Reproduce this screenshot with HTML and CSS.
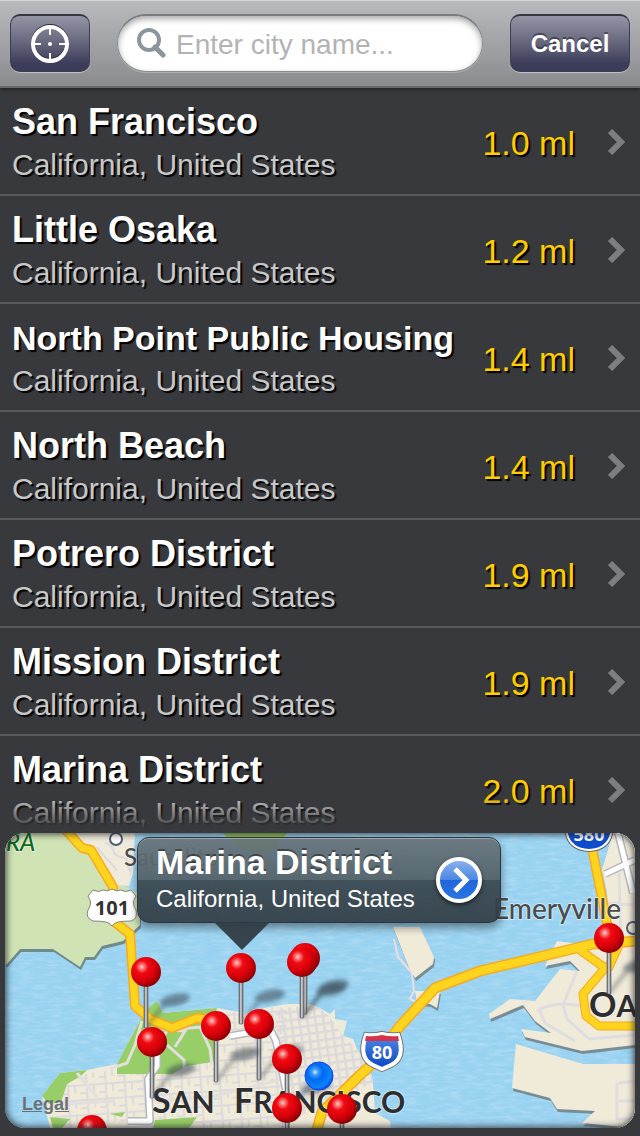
FILE: index.html
```html
<!DOCTYPE html>
<html lang="en">
<head>
  <meta charset="UTF-8">
  <meta name="viewport" content="width=device-width, initial-scale=1.0">
  <title>Choose City</title>
  <link rel="stylesheet" href="styles.css">
</head>
<body>
  <!-- Search bar -->
  <header class="toolbar">
    <button type="button" class="btn btn-locate" aria-label="Locate me">
      <svg width="40" height="40" viewBox="0 0 40 40" fill="none" stroke="#fff">
        <circle cx="20" cy="19" r="17" stroke="#2b2c40" stroke-width="4"/>
        <circle cx="20" cy="20" r="17" stroke-width="4"/>
        <path d="M20 4v7M20 29v7M4 20h7M29 20h7" stroke-width="2"/>
        <circle cx="20" cy="20" r="2" fill="#fff" stroke="none"/>
      </svg>
    </button>
    <form class="search">
      <label for="city">
        <svg width="30" height="32" viewBox="0 0 30 32" fill="none" stroke="#8b959c">
          <circle cx="13" cy="12" r="10" stroke-width="4"/>
          <path d="M19 19l8 8" stroke-width="5" stroke-linecap="round"/>
        </svg>
      </label>
      <input type="text" id="city" name="city" placeholder="Enter city name..." aria-label="City name">
    </form>
    <button type="button" class="btn btn-cancel">Cancel</button>
  </header>

  <!-- Nearby places -->
  <main class="places">
    <a class="place" href="#san-francisco">
      <span class="place-text"><b>San Francisco</b><small>California, United States</small></span>
      <span class="distance">1.0 ml</span>
      <svg class="chevron" viewBox="0 0 18 26"><path d="M2 2l11 11L2 24"/></svg>
    </a>
    <a class="place" href="#little-osaka">
      <span class="place-text"><b>Little Osaka</b><small>California, United States</small></span>
      <span class="distance">1.2 ml</span>
      <svg class="chevron" viewBox="0 0 18 26"><path d="M2 2l11 11L2 24"/></svg>
    </a>
    <a class="place" href="#north-point">
      <span class="place-text"><b class="long">North Point Public Housing</b><small>California, United States</small></span>
      <span class="distance">1.4 ml</span>
      <svg class="chevron" viewBox="0 0 18 26"><path d="M2 2l11 11L2 24"/></svg>
    </a>
    <a class="place" href="#north-beach">
      <span class="place-text"><b>North Beach</b><small>California, United States</small></span>
      <span class="distance">1.4 ml</span>
      <svg class="chevron" viewBox="0 0 18 26"><path d="M2 2l11 11L2 24"/></svg>
    </a>
    <a class="place" href="#potrero">
      <span class="place-text"><b>Potrero District</b><small>California, United States</small></span>
      <span class="distance">1.9 ml</span>
      <svg class="chevron" viewBox="0 0 18 26"><path d="M2 2l11 11L2 24"/></svg>
    </a>
    <a class="place" href="#mission">
      <span class="place-text"><b>Mission District</b><small>California, United States</small></span>
      <span class="distance">1.9 ml</span>
      <svg class="chevron" viewBox="0 0 18 26"><path d="M2 2l11 11L2 24"/></svg>
    </a>
    <a class="place" href="#marina">
      <span class="place-text"><b>Marina District</b><small>California, United States</small></span>
      <span class="distance">2.0 ml</span>
      <svg class="chevron" viewBox="0 0 18 26"><path d="M2 2l11 11L2 24"/></svg>
    </a>
  </main>

  <section class="map" aria-label="Map">
    <svg class="map-canvas" viewBox="0 0 630 295" preserveAspectRatio="xMinYMin slice">
      <defs>
        <radialGradient id="red" cx=".36" cy=".33" r=".7">
          <stop offset="0" stop-color="#ffd0d0"/>
          <stop offset=".14" stop-color="#fb6a6a"/>
          <stop offset=".3" stop-color="#f00a12"/>
          <stop offset=".65" stop-color="#d8000a"/>
          <stop offset="1" stop-color="#8a0004"/>
        </radialGradient>
        <radialGradient id="blue" cx=".36" cy=".36" r=".7">
          <stop offset="0" stop-color="#d0f4ff"/>
          <stop offset=".16" stop-color="#3a9cff"/>
          <stop offset=".4" stop-color="#0068f4"/>
          <stop offset=".8" stop-color="#0a84f8"/>
          <stop offset="1" stop-color="#0048e0"/>
        </radialGradient>
        <linearGradient id="stem">
          <stop offset="0" stop-color="#55585c"/>
          <stop offset=".45" stop-color="#d8dadd"/>
          <stop offset="1" stop-color="#5c5f63"/>
        </linearGradient>
        <linearGradient id="shield" x2="0" y2="1">
          <stop offset="0" stop-color="#4f8be6"/>
          <stop offset="1" stop-color="#0b45c4"/>
        </linearGradient>
        <filter id="soft" x="-50%" y="-50%" width="200%" height="200%"><feGaussianBlur stdDeviation="2"/></filter>
        <filter id="waves" x="0" y="0" width="100%" height="100%">
          <feTurbulence type="fractalNoise" baseFrequency=".07 .3" numOctaves="3" seed="4"/>
          <feColorMatrix values="0 0 0 0 1  0 0 0 0 1  0 0 0 0 1  1.6 0 0 0 -.62"/>
        </filter>
        <pattern id="streets" width="19" height="15" patternUnits="userSpaceOnUse" patternTransform="rotate(-4)">
          <path d="M0 2h19M7 0v15M0 10h7M14 2v8" stroke="#dddadd" stroke-width="2" fill="none"/>
        </pattern>
        <pattern id="downtown" width="8" height="8" patternUnits="userSpaceOnUse" patternTransform="rotate(-8)">
          <path d="M0 1h8M1 0v8" stroke="#dcd9dc" stroke-width="3" fill="none"/>
        </pattern>
        <g id="pin">
          <path d="M0 55L18 33" stroke="#39454d" stroke-opacity=".4" stroke-width="4" filter="url(#soft)"/>
          <ellipse cx="29" cy="28" rx="15" ry="6" transform="rotate(-12 29 28)" fill="#33424e" fill-opacity=".55" filter="url(#soft)"/>
          <rect x="-2" y="12" width="4" height="44" rx="1" fill="url(#stem)" stroke="#55585c" stroke-opacity=".6"/>
          <circle r="15" fill="url(#red)"/>
        </g>
        <g id="land">
          <path d="M0 0h75l40 50 20 12v30l-12 11-5 5-21 5-8 11h-9l-5 10-27-18H15L2 131H0z" fill="#cfe3b4"/>
          <path d="M388 94h27l14 30-1 7-18 14-6-10zM410 158h25l-3 17-7-4-13-1z" fill="#f0ead9"/>
          <path d="M608 0h22v212l-53 6-57-14-4-8 30 4-16-12-12-16-33 14-1-5 21-15 25 2 25-32 20 2-10-10-25 5 12-25 28 4 24-14-2-38-5-23z" fill="#f0ead9"/>
          <path d="M511 211l67 20h52v64l-53-5 13-12-38-2-7-11-38-10z" fill="#f0ead9"/>
        </g>
      </defs>

      <rect width="630" height="295" fill="#98d2f1"/>
      <rect width="630" height="295" filter="url(#waves)" opacity=".28"/>

      <use href="#land" x="1" y="3" class="coast"/>
      <use href="#land"/>

      <!-- Marin -->
      <path d="M64 0h66l-2 41-4 12-12-1-25-35-16-8z" fill="#efeadb"/>
      <path d="M100 10c12 2 4 12 16 14s4 12 10 14M92 14c6 10 14 14 20 24" stroke="#ddd9dc" stroke-width="2" fill="none"/>
      <path d="M218 0h64l-12 16-15 5-23-7z" fill="#94c95c"/>

      <!-- San Francisco -->
      <path d="M45 295l-8-32 18-23 27-3 30-6 20-38 10-17 10-8 6 12 54-5 33 6 14-6 23-4 23 0 10 4 10 6 5-5v10l12 2-4 15 10 3 4 10 13 20 3 14 2 30 15 8 1 7z" fill="#f0ead9"/>
      <path d="M62 244l50-8 62-3 40-6 0-46 68-10v124H48l2-24z" fill="url(#streets)"/>
      <path d="M270 175l42-2 10 8 16 22 14 13 13 20 3 14-88 40z" fill="url(#downtown)"/>
      <path d="M112 241v-10l20-38 10-17 10-8 6 12 54-5-4 20 5 33-31 5-15 8z" fill="#97ce68"/>
      <path d="M37 263l18-23 27-3-6 6-14 8-6 18-12 2z" fill="#97ce68"/>
      <path d="M150 287l42-3-8 11h-36zM45 284l20 2-8 9H48zM105 281l15-2-3 5z" fill="#97ce68"/>
      <g stroke="#e3dfdc" stroke-width="3" fill="none">
        <path d="M137 188l-7 24-8 18-17 6M142 182l20 16-14 20M152 196l28 2-10 16M162 212l17 15v14M175 196l20-2 10 22 2 16"/>
        <path d="M48 272l60-4M72 240l20 24M145 268l65-5 72-18"/>
      </g>

      <!-- island and East Bay roads -->
      <path d="M389 106l4 18 14 16 2 18-4 8 8 4" stroke="#e9dfe2" stroke-width="2" fill="none"/>
      <g stroke="#e0dde0" stroke-width="3" fill="none">
        <path d="M532 178q22-14 62 0M572 138l-14 34 4 14 22 20 46-4M534 176l6 14 30 18M612 250v36h18M614 268h16M614 250l16-2"/>
        <path d="M602 70l28 2M614 40l2 70"/>
      </g>

      <!-- minor highways -->
      <g fill="none" stroke-linejoin="round">
        <path d="M152 218v15l-9 13 2 42h-22M225 203l40-7 6 12 10 50v40M600 41l30-14M613 0l15 60" stroke="#b4b9bd" stroke-width="8"/>
        <path d="M152 218v15l-9 13 2 42h-22M225 203l40-7 6 12 10 50v40M600 41l30-14M613 0l15 60" stroke="#fff" stroke-width="5"/>
      </g>

      <!-- freeways -->
      <g fill="none" stroke-linejoin="round">
        <g stroke="#f7aa1e" stroke-width="10">
          <path d="M60-4l17 19 9 2 22 37-1 33 18 14 5 72 15 13 22 9 25-10 10 1M587 15l5 25 10 50 3 18"/>
          <path d="M575 117l25 18-22 26 3 22 13 10h40M615 110l-12 26" stroke-width="9"/>
          <path d="M311 300l6-21 38-37 10-9 30-40 35-38 45-17 63-15 50-12 47-3" stroke-width="11"/>
        </g>
        <g stroke="#ffd41f" stroke-width="7">
          <path d="M60-4l17 19 9 2 22 37-1 33 18 14 5 72 15 13 22 9 25-10 10 1M587 15l5 25 10 50 3 18"/>
          <path d="M575 117l25 18-22 26 3 22 13 10h40M615 110l-12 26"/>
          <path d="M311 300l6-21 38-37 10-9 30-40 35-38 45-17 63-15 50-12 47-3" stroke-width="8"/>
        </g>
      </g>

      <!-- labels -->
      <circle cx="111" cy="6" r="6" fill="#fff" stroke="#4c6078" stroke-width="2"/>
      <circle cx="628" cy="95" r="6" fill="none" stroke="#4c6078" stroke-width="2"/>
      <g class="map-label">
        <text class="park" x="1" y="18">RA</text>
        <text x="119" y="33">Sausalito</text>
        <text class="town" x="488" y="86">Emeryville</text>
        <text class="city" x="147" y="280">S<tspan class="cap">AN</tspan></text>
        <text class="city" x="229" y="280">F<tspan class="cap">RANCISCO</tspan></text>
        <text class="city" x="584" y="184">O<tspan class="cap">A</tspan></text>
      </g>

      <!-- route shields -->
      <path d="M88 57q6 3 10 0 5 2 9-1 4 3 9 1 5 3 10 0l5 6q-5 7 0 14 2 9-5 11-8 0-13 1-4 1-6 4-2-3-6-4-6-1-13-1-8-3-5-11 5-7 0-14z" fill="#fff" stroke="#83857f" stroke-width="1"/>
      <text class="route route-us" x="107" y="82">101</text>
      <path d="M361 202q8 1 16-1 8 2 16 1 8 23-7 30l-9 4-9-4q-15-7-7-30z" fill="url(#shield)" stroke="#777" stroke-width="6"/>
      <path d="M361 202q8 1 16-1 8 2 16 1 8 23-7 30l-9 4-9-4q-15-7-7-30z" fill="url(#shield)" stroke="#fff" stroke-width="4"/>
      <path d="M361 203q8 1 16-1 8 2 16 1l1 5h-34z" fill="#d8324a"/>
      <text class="route" x="377" y="226">80</text>
      <path d="M559-8q0 26 25 27 25-1 25-27z" fill="#666"/>
      <path d="M561-8q0 24 23 25 23-1 23-25z" fill="#0e4ccb" stroke="#fff" stroke-width="2"/>
      <text class="route" x="584" y="8">580</text>

      <!-- pins -->
      <use href="#pin" x="604" y="105"/>
      <use href="#pin" x="300" y="125"/>
      <use href="#pin" x="297" y="129"/>
      <use href="#pin" x="236" y="135"/>
      <use href="#pin" x="141" y="139"/>
      <use href="#pin" x="254" y="191"/>
      <use href="#pin" x="211" y="193"/>
      <use href="#pin" x="147" y="209"/>
      <use href="#pin" x="282" y="226"/>
      <circle cx="314" cy="243" r="14" fill="url(#blue)" stroke="#0a3ff0" stroke-width="1"/>
      <use href="#pin" x="282" y="275"/>
      <use href="#pin" x="337" y="276"/>
      <use href="#pin" x="87" y="297"/>
    </svg>

    <a class="legal" href="#legal">Legal</a>

    <div class="callout">
      <div class="callout-text"><b>Marina District</b><small>California, United States</small></div>
      <button type="button" class="disclosure" aria-label="Show Marina District">
        <svg viewBox="0 0 46 46" width="46" height="46">
          <defs>
            <linearGradient id="disc" x2="0" y2="1">
              <stop offset="0" stop-color="#8fb5ee"/>
              <stop offset=".5" stop-color="#4a86e4"/>
              <stop offset=".51" stop-color="#1f66db"/>
              <stop offset="1" stop-color="#2b76e6"/>
            </linearGradient>
          </defs>
          <circle cx="23" cy="23" r="21" fill="url(#disc)" stroke="#fff" stroke-width="4"/>
          <path d="M19 12l11 11-11 11" fill="none" stroke="#fff" stroke-width="5"/>
        </svg>
      </button>
    </div>
  </section>
</body>
</html>
```

FILE: styles.css
```css
*, *::before, *::after {
  box-sizing: border-box;
}
body {
  display: flex;
  flex-direction: column;
  height: 100vh;
  margin: 0;
  background-color: #38393d;
  color: #fff;
  font-family: "Liberation Sans", Arial, sans-serif;
}
small, b {
  display: block;
}

/* Toolbar */
.toolbar {
  display: flex;
  gap: 27px;
  flex: none;
  padding: 13px 10px 14px;
  border-top: 1px solid #d3d4d6;
  border-bottom: 2px solid #66676b;
  background: linear-gradient(#b9babd, #8a8b8e);
  box-shadow: 0 1px 4px rgba(0, 0, 0, 0.5);
}
.btn {
  display: flex;
  align-items: center;
  justify-content: center;
  height: 58px;
  padding: 0;
  border: 1px solid #3c3d50;
  border-top: 2px solid #35363f;
  border-radius: 10px;
  background: linear-gradient(#9495a5, #66677c 48%, #3d3e5b 85%, #3b3c59);
  box-shadow: 0 1px 1px rgba(255, 255, 255, 0.45);
  color: #fff;
  font: bold 24px/28px "Liberation Sans", Arial, sans-serif;
  text-shadow: 0 -2px 0 rgba(40, 41, 60, 0.6);
  cursor: pointer;
}
.btn-locate {
  width: 80px;
}
.btn-cancel {
  width: 120px;
}
.search {
  display: flex;
  align-items: center;
  flex: 1;
  gap: 10px;
  min-width: 0;
  height: 58px;
  padding: 0 20px 0 18px;
  border: 1px solid #88898c;
  border-top: 2px solid #7a7b7e;
  border-radius: 29px;
  background: #fff;
  box-shadow: inset 0 3px 6px rgba(0, 0, 0, 0.35), 0 1px 0 rgba(255, 255, 255, 0.25);
}
.search svg {
  display: block;
}
.search input {
  flex: 1;
  min-width: 0;
  padding: 2px 0 0;
  border: none;
  outline: none;
  background: none;
  color: #333;
  font: 28px/32px "Liberation Sans", Arial, sans-serif;
}
.search input::placeholder {
  color: #b3b3b3;
  opacity: 1;
}

/* Places list */
.places {
  position: relative;
  flex: 1;
  min-height: 0;
  overflow: hidden;
}
/* Fade out above the map */
.places::after {
  content: "";
  position: absolute;
  right: 0;
  bottom: 0;
  left: 0;
  height: 36px;
  background: linear-gradient(rgba(56, 57, 61, 0), #38393d 90%);
  pointer-events: none;
}
.place {
  display: flex;
  align-items: center;
  padding: 14px 14px 12px 12px;
  border-bottom: 2px solid #58595c;
  color: #fff;
  text-decoration: none;
  text-shadow: 2px 2px 1px #000;
}
.place-text {
  flex: 1;
  display: grid;
  gap: 6px;
  white-space: nowrap;
}
.place b {
  font-size: 36px;
  line-height: 40px;
}
.place .long {
  font-size: 34px;
}
.place small {
  color: #c8c8c8;
  font-size: 30px;
  line-height: 34px;
}
.distance {
  padding-top: 2px;
  color: #fc0;
  font-size: 34px;
  line-height: 38px;
}
.chevron {
  width: 18px;
  height: 26px;
  margin-left: 33px;
  fill: none;
  stroke: #7d7e80;
  stroke-width: 6;
}

/* Map */
.map {
  position: relative;
  flex: none;
  height: 295px;
  margin: 0 5px 8px;
  border-radius: 20px;
  overflow: hidden;
}
.map::after {
  content: "";
  position: absolute;
  inset: 0;
  border-radius: 20px;
  box-shadow: inset 0 0 7px 1px rgba(30, 31, 34, 0.85);
  pointer-events: none;
}
.map-canvas {
  display: block;
  width: 100%;
  height: 100%;
}
.coast {
  filter: brightness(0.4);
  opacity: 0.6;
}
.map-label text {
  fill: #4b4b4b;
  font: 500 24px Lato, "Open Sans", sans-serif;
  paint-order: stroke;
  stroke: rgba(255, 255, 255, 0.45);
  stroke-width: 2px;
}
.map-label .town {
  font-size: 28px;
}
.map-label .park {
  fill: #0d6a1f;
  font-style: italic;
}
.map-label .city {
  fill: #2e2e2e;
  font-size: 34px;
  font-weight: bold;
}
.map-label .cap {
  font-size: 30px;
}
.route {
  fill: #fff;
  font: bold 18px "Open Sans", sans-serif;
  text-anchor: middle;
}
.route-us {
  fill: #333;
  font-size: 20px;
}
.legal {
  position: absolute;
  bottom: 14px;
  left: 17px;
  color: #6b7276;
  font-size: 18px;
  font-weight: bold;
  line-height: 20px;
}

/* Callout over the selected pin */
.callout {
  position: absolute;
  top: 4px;
  left: 132px;
  z-index: 1;
  display: flex;
  align-items: center;
  gap: 21px;
  padding: 5px 18px 9px 18px;
  border: 1px solid #2c363c;
  border-radius: 12px;
  background: linear-gradient(rgba(104, 116, 122, 0.93), rgba(82, 95, 102, 0.93) 50%, rgba(58, 71, 79, 0.93) 50%, rgba(48, 60, 68, 0.93));
  box-shadow: inset 0 1px 0 rgba(255, 255, 255, 0.35), 0 5px 8px rgba(0, 0, 0, 0.4);
  white-space: nowrap;
}
.callout::after {
  content: "";
  position: absolute;
  top: 100%;
  left: 76px;
  width: 56px;
  height: 28px;
  background: rgba(48, 60, 68, 0.95);
  clip-path: polygon(0 0, 100% 0, 50% 100%);
}
.callout b {
  font-size: 34px;
  line-height: 38px;
  text-shadow: 0 -2px 0 rgba(0, 0, 0, 0.4);
}
.callout small {
  margin-top: 4px;
  font-size: 24px;
  line-height: 28px;
}
.disclosure {
  width: 46px;
  height: 46px;
  margin-top: 4px;
  padding: 0;
  border: none;
  border-radius: 50%;
  background: none;
  box-shadow: 0 2px 4px rgba(0, 0, 0, 0.6);
  cursor: pointer;
}
.disclosure svg {
  display: block;
}
```
